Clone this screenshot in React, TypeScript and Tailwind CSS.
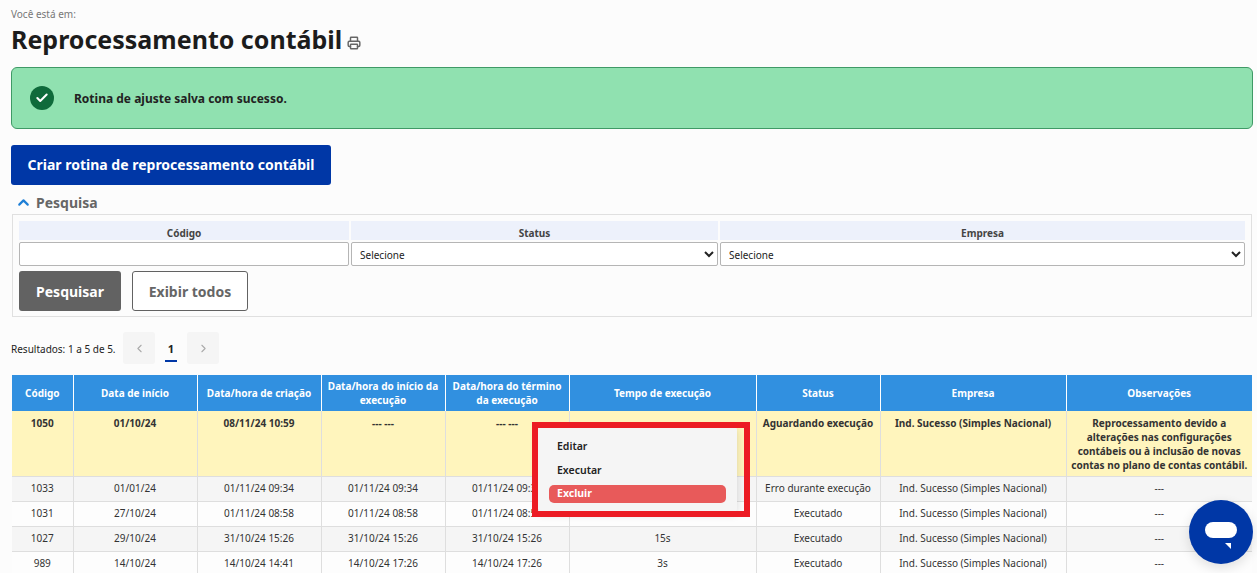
import { Printer, ChevronUp, ChevronLeft, ChevronRight, Check } from "lucide-react";

const headers = [
  "Código",
  "Data de início",
  "Data/hora de criação",
  "Data/hora do início da execução",
  "Data/hora do término da execução",
  "Tempo de execução",
  "Status",
  "Empresa",
  "Observações",
];
const widths = [61, 124, 124, 124, 124, 187, 124, 186, 186];
const empresa = "Ind. Sucesso (Simples Nacional)";
const rows = [
  ["1033", "01/01/24", "01/11/24 09:34", "01/11/24 09:34", "01/11/24 09:34", "", "Erro durante execução", empresa, "---"],
  ["1031", "27/10/24", "01/11/24 08:58", "01/11/24 08:58", "01/11/24 08:58", "", "Executado", empresa, "---"],
  ["1027", "29/10/24", "31/10/24 15:26", "31/10/24 15:26", "31/10/24 15:26", "15s", "Executado", empresa, "---"],
  ["989", "14/10/24", "14/10/24 14:41", "14/10/24 17:26", "14/10/24 17:26", "3s", "Executado", empresa, "---"],
];
const highlighted = [
  "1050",
  "01/10/24",
  "08/11/24 10:59",
  "--- ---",
  "--- ---",
  "",
  "Aguardando execução",
  empresa,
  "Reprocessamento devido a alterações nas configurações contábeis ou à inclusão de novas contas no plano de contas contábil.",
];
const font = { fontFamily: '"Noto Sans", sans-serif' };

function SearchSelect() {
  return (
    <select className="h-[24px] w-full rounded-[2px] border border-[#b5b5b5] bg-white pl-[4px] pt-[2px] text-[10px] text-[#222]">
      <option>Selecione</option>
    </select>
  );
}

export default function App() {
  return (
    <div className="relative h-[573px] w-[1257px] overflow-hidden bg-[#fcfcfc] text-[#222]" style={font}>
      <div className="px-[11px] pr-[4px] pt-[8px]">
        <div className="h-[13px] text-[10px] leading-[13px] text-[#777]">Você está em:</div>
        <div className="mt-[3px] flex h-[30px] items-center">
          <h1 className="text-[25px] font-bold leading-[30px] text-[#1c1c1c]">Reprocessamento contábil</h1>
          <Printer className="ml-[5px] mt-[8px] text-[#666]" size={14} strokeWidth={2.5} />
        </div>

        <div className="mt-[13px] flex h-[62px] w-[1242px] items-center rounded-[6px] border border-[#3f9a66] bg-[#90e1b0] pl-[18px]">
          <div className="flex h-[24px] w-[24px] items-center justify-center rounded-full bg-[#0f6a3b]">
            <Check className="text-white" size={14} strokeWidth={3.5} />
          </div>
          <span className="ml-[20px] pt-[2px] text-[12px] font-bold text-[#222]">Rotina de ajuste salva com sucesso.</span>
        </div>

        <button className="mt-[16px] block h-[40px] w-[320px] rounded-[3px] bg-[#0037a6] pb-[1px] text-center text-[14px] font-bold text-white">
          Criar rotina de reprocessamento contábil
        </button>

        <div className="mt-[7px] flex h-[20px] items-center pl-[4px]">
          <ChevronUp className="text-[#1f7fd6]" size={17} strokeWidth={3} />
          <span className="ml-[4px] text-[14px] font-bold text-[#666]">Pesquisa</span>
        </div>

        <div className="ml-[1px] mt-[2px] h-[103px] w-[1240px] border border-[#e0e0e0] px-[6px] pt-[6px]">
          <div className="grid grid-cols-[330px_367px_525px] gap-x-[2px] gap-y-[2px]">
            {["Código", "Status", "Empresa"].map((h) => (
              <div key={h} className="flex h-[19px] items-center justify-center bg-[#edf1fb] pt-[5px] text-[10px] font-bold text-[#444]">
                {h}
              </div>
            ))}
            <input className="h-[24px] rounded-[2px] border border-[#b5b5b5] bg-white" />
            <SearchSelect />
            <SearchSelect />
          </div>
          <div className="mt-[5px] flex gap-[11px]">
            <button className="h-[40px] w-[102px] rounded-[3px] bg-[#626262] text-[14px] font-bold text-white">Pesquisar</button>
            <button className="h-[40px] w-[116px] rounded-[3px] border border-[#626262] bg-white text-[14px] font-bold text-[#666]">Exibir todos</button>
          </div>
        </div>

        <div className="mt-[15px] flex h-[32px] items-center">
          <span className="w-[104px] whitespace-nowrap pt-[2px] text-[10px] text-[#222]">Resultados: 1 a 5 de 5.</span>
          <div className="ml-[8px] flex h-[32px] w-[32px] items-center justify-center rounded-[3px] bg-[#f5f5f5]">
            <ChevronLeft className="text-[#aaa]" size={13} />
          </div>
          <div className="relative flex h-[32px] w-[32px] items-center justify-center pt-[2px] text-[11px] font-bold text-[#222]">
            1
            <div className="absolute bottom-[2px] left-[10px] h-[2px] w-[12px] bg-[#0037a6]"></div>
          </div>
          <div className="flex h-[32px] w-[32px] items-center justify-center rounded-[3px] bg-[#f5f5f5]">
            <ChevronRight className="text-[#aaa]" size={13} />
          </div>
        </div>

        <table className="ml-[1px] mt-[11px] w-[1240px] table-fixed border-collapse text-[10px] leading-[14px]">
          <colgroup>
            {widths.map((w, i) => (
              <col key={i} style={{ width: w }} />
            ))}
          </colgroup>
          <thead>
            <tr className="h-[36px] bg-[#3190e0]">
              {headers.map((h) => (
                <th key={h} className="border-x border-x-white px-[4px] py-0 text-center align-middle text-[10px] font-bold leading-[14px] text-white first:border-l-0 last:border-r-0">
                  {h}
                </th>
              ))}
            </tr>
          </thead>
          <tbody>
            <tr className="h-[65px] bg-[#fff5bd]">
              {highlighted.map((c, i) => (
                <td key={i} className="border-x border-b border-[#dedede] px-[4px] pt-[5px] text-center align-top font-bold text-[#333] first:border-l-0 last:border-r-0">
                  {c}
                </td>
              ))}
            </tr>
            {rows.map((r, ri) => (
              <tr key={ri} className={ri % 2 === 0 ? "h-[25px] bg-[#f5f5f5]" : "h-[25px] bg-[#fdfdfd]"}>
                {r.map((c, i) => (
                  <td key={i} className="border-x border-b border-[#dedede] px-[4px] pb-[2px] text-center align-middle text-[#333] first:border-l-0 last:border-r-0">
                    {c}
                  </td>
                ))}
              </tr>
            ))}
          </tbody>
        </table>
      </div>

      <div className="absolute left-[538px] top-[427px] flex h-[85px] w-[199px] flex-col rounded-[3px] bg-[#f5f5f5] px-[11px] pt-[8px] text-[10.5px] font-semibold text-[#222] shadow-[0_2px_8px_rgba(0,0,0,0.15)]">
        <div className="flex h-[24px] items-center pl-[8px]">Editar</div>
        <div className="flex h-[24px] items-center pl-[8px]">Executar</div>
        <div className="mt-[2px] flex h-[18px] items-center rounded-[5px] bg-[#e85a5a] pl-[8px] font-bold text-white">Excluir</div>
      </div>
      <div className="pointer-events-none absolute left-[532px] top-[422px] h-[95px] w-[218px] border-[6px] border-[#ec1c24]"></div>

      <div className="fixed left-[1189px] top-[500px] flex h-[64px] w-[64px] items-center justify-center rounded-full bg-[#0037a6] shadow-[0_4px_12px_rgba(0,0,0,0.12)]">
        <svg className="mt-[7px]" width="32" height="27" viewBox="0 0 32 27">
          <rect x="0" y="0" width="32" height="16" rx="8" fill="#fff" />
          <path d="M20 21 H26 V27 Z" fill="#fff" />
        </svg>
      </div>
    </div>
  );
}
